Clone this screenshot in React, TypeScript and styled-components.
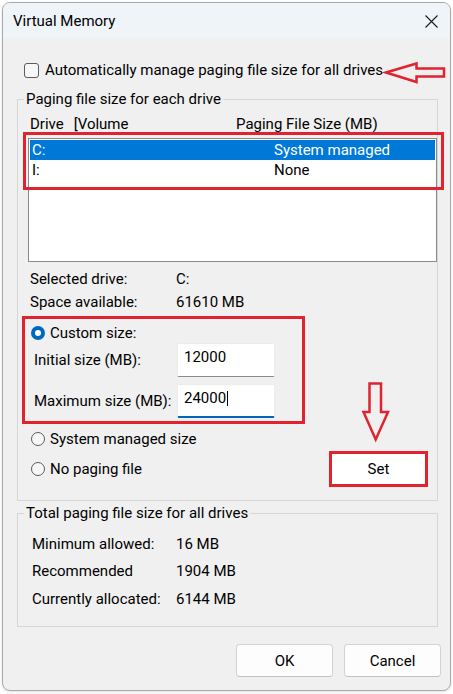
import React from "react";
import styled, { createGlobalStyle } from "styled-components";

const RED = "#e0232e";
const ACCENT = "#0067c0";

const GlobalStyle = createGlobalStyle`
  * { box-sizing: border-box; }
  html, body { margin: 0; padding: 0; background: #ffffff; }
  body {
    font-family: Roboto, "Noto Sans", Arial, sans-serif;
    font-size: 15px;
    color: #000;
  }
`;

const Screen = styled.div`
  position: relative;
  width: 453px;
  height: 694px;
  padding: 2px;
  overflow: hidden;
  background: #ffffff;
`;

const Window = styled.div`
  width: 449px;
  height: 689px;
  border: 1px solid #a9a9a9;
  border-radius: 8px;
  background: #f0f0f0;
  display: flex;
  flex-direction: column;
  overflow: hidden;
  box-shadow: 0 1px 3px rgba(0, 0, 0, 0.12);
`;

const TitleBar = styled.div`
  flex: none;
  height: 35px;
  display: flex;
  align-items: center;
  justify-content: space-between;
  padding: 0 12px 0 10px;
  background: #eff4f9;
  line-height: 18px;
`;

const Title = styled.span`
  font-size: 15px;
  color: #000;
`;

const CloseIcon = styled.svg`
  display: block;
  width: 13px;
  height: 13px;
  margin-top: 1px;
`;

const Body = styled.div`
  flex: 1;
  display: flex;
  flex-direction: column;
  padding: 22px 12px 0 14px;
`;

const CheckRow = styled.label`
  height: 20px;
  display: flex;
  align-items: center;
  gap: 6px;
  margin-left: 7px;
  line-height: 18px;
`;

const CheckBox = styled.span`
  width: 15px;
  height: 15px;
  border: 1px solid #5c5c5c;
  border-radius: 3px;
  background: #f7f7f7;
  flex: none;
`;

const Group = styled.section<{ $gap: number; $pt: number; $pb: number }>`
  position: relative;
  margin-top: ${(p) => p.$gap}px;
  border: 1px solid #d6d6d6;
  padding: ${(p) => p.$pt}px 0 ${(p) => p.$pb}px 0;
  display: flex;
  flex-direction: column;
`;

const Legend = styled.span`
  position: absolute;
  top: -10px;
  left: 6px;
  padding: 0 2px;
  line-height: 18px;
  background: #f0f0f0;
`;

const ColumnHeader = styled.div`
  display: grid;
  grid-template-columns: 206px auto;
  margin-left: 12px;
  line-height: 18px;
  height: 18px;
`;

const DriveHead = styled.span`
  display: flex;
  gap: 10px;
`;

const ListBox = styled.div`
  margin: 5px 0 0 10px;
  height: 124px;
  border: 1px solid #8b8b8b;
  background: #ffffff;
  padding: 1px;
`;

const ListRows = styled.div`
  position: relative;
  &::after {
    content: "";
    position: absolute;
    top: -8px;
    left: -7px;
    right: -9px;
    bottom: -10px;
    border: 3px solid ${RED};
    pointer-events: none;
  }
`;

const ListRow = styled.div<{ $selected?: boolean }>`
  height: 20px;
  display: grid;
  grid-template-columns: 242px auto;
  align-items: center;
  padding-left: 2px;
  line-height: 18px;
  background: ${(p) => (p.$selected ? "#0078d7" : "transparent")};
  color: ${(p) => (p.$selected ? "#ffffff" : "#000000")};
`;

const InfoGrid = styled.div<{ $left: number; $col: number; $row: number; $top: number }>`
  display: grid;
  grid-template-columns: ${(p) => p.$col}px auto;
  grid-auto-rows: ${(p) => p.$row}px;
  align-items: center;
  margin: ${(p) => p.$top}px 0 0 ${(p) => p.$left}px;
  line-height: 18px;
`;

const CustomBlock = styled.div`
  position: relative;
  margin-top: 10px;
  display: flex;
  flex-direction: column;
  &::after {
    content: "";
    position: absolute;
    top: -7px;
    left: 4px;
    width: 277px;
    bottom: -6px;
    border: 3px solid ${RED};
    pointer-events: none;
  }
`;

const RadioRow = styled.div<{ $top: number; $height?: number }>`
  height: ${(p) => p.$height ?? 20}px;
  margin-top: ${(p) => p.$top}px;
  display: flex;
  align-items: center;
  padding-left: 13px;
  line-height: 18px;
`;

const RadioLabel = styled.label`
  display: flex;
  align-items: center;
  gap: 5px;
`;

const Radio = styled.span<{ $checked?: boolean }>`
  width: 14px;
  height: 14px;
  border-radius: 50%;
  flex: none;
  display: flex;
  align-items: center;
  justify-content: center;
  border: ${(p) => (p.$checked ? "none" : "1px solid #5c5c5c")};
  background: ${(p) => (p.$checked ? ACCENT : "#f7f7f7")};
  &::before {
    content: "";
    display: ${(p) => (p.$checked ? "block" : "none")};
    width: 6px;
    height: 6px;
    border-radius: 50%;
    background: #ffffff;
  }
`;

const Spacer = styled.div`
  flex: 1;
`;

const SizeRow = styled.div<{ $top: number }>`
  display: grid;
  grid-template-columns: 143px 98px;
  align-items: center;
  margin: ${(p) => p.$top}px 0 0 16px;
  line-height: 18px;
`;

const TextBox = styled.div<{ $focused?: boolean }>`
  height: 34px;
  background: #ffffff;
  border: 1px solid #ececec;
  border-bottom: ${(p) => (p.$focused ? `2px solid ${ACCENT}` : "1px solid #8a8a8a")};
  border-radius: 2px;
  padding: 4px 6px 0 6px;
  line-height: 18px;
`;

const Caret = styled.span`
  display: inline-block;
  width: 1px;
  height: 15px;
  background: #000;
  vertical-align: -3px;
  margin-left: 1px;
`;

const Button = styled.button<{ $highlight?: boolean; $w: number; $h: number }>`
  width: ${(p) => p.$w}px;
  height: ${(p) => p.$h}px;
  font: inherit;
  font-size: 15px;
  color: #000;
  line-height: 18px;
  padding: 0;
  background: ${(p) => (p.$highlight ? "#ffffff" : "#fdfdfd")};
  border: ${(p) => (p.$highlight ? `3px solid ${RED}` : "1px solid #d3d3d3")};
  border-bottom-color: ${(p) => (p.$highlight ? RED : "#c2c2c2")};
  border-radius: ${(p) => (p.$highlight ? 0 : 4)}px;
`;

const SetButton = styled(Button)`
  margin-right: 9px;
`;

const ButtonBar = styled.div`
  display: flex;
  justify-content: flex-end;
  gap: 11px;
  margin: 17px -3px 0 0;
`;

const ArrowSvg = styled.svg<{ $x: number; $y: number }>`
  position: absolute;
  left: ${(p) => p.$x}px;
  top: ${(p) => p.$y}px;
  overflow: visible;
  pointer-events: none;
`;

const drives = [
  { drive: "C:", size: "System managed", selected: true },
  { drive: "I:", size: "None", selected: false },
];

const totals = [
  ["Minimum allowed:", "16 MB"],
  ["Recommended", "1904 MB"],
  ["Currently allocated:", "6144 MB"],
];

export default function App() {
  return (
    <>
      <GlobalStyle />
      <Screen>
        <Window>
          <TitleBar>
            <Title>Virtual Memory</Title>
            <CloseIcon viewBox="0 0 13 13">
              <path d="M0.5 0.5 L12.5 12.5 M12.5 0.5 L0.5 12.5" stroke="#1a1a1a" strokeWidth="1.1" fill="none" />
            </CloseIcon>
          </TitleBar>
          <Body>
            <CheckRow>
              <CheckBox />
              <span>Automatically manage paging file size for all drives</span>
            </CheckRow>

            <Group $gap={19} $pt={15} $pb={13}>
              <Legend>Paging file size for each drive</Legend>
              <ColumnHeader>
                <DriveHead>
                  <span>Drive</span>
                  <span>[Volume</span>
                </DriveHead>
                <span>Paging File Size (MB)</span>
              </ColumnHeader>
              <ListBox>
                <ListRows>
                  {drives.map((d) => (
                    <ListRow key={d.drive} $selected={d.selected}>
                      <span>{d.drive}</span>
                      <span>{d.size}</span>
                    </ListRow>
                  ))}
                </ListRows>
              </ListBox>

              <InfoGrid $left={12} $col={146} $row={23} $top={5}>
                <span>Selected drive:</span>
                <span>C:</span>
                <span>Space available:</span>
                <span>61610 MB</span>
              </InfoGrid>

              <CustomBlock>
                <RadioRow $top={0}>
                  <RadioLabel>
                    <Radio $checked />
                    <span>Custom size:</span>
                  </RadioLabel>
                </RadioRow>
                <SizeRow $top={0}>
                  <span>Initial size (MB):</span>
                  <TextBox>12000</TextBox>
                </SizeRow>
                <SizeRow $top={7}>
                  <span>Maximum size (MB):</span>
                  <TextBox $focused>
                    24000
                    <Caret />
                  </TextBox>
                </SizeRow>
              </CustomBlock>

              <RadioRow $top={11}>
                <RadioLabel>
                  <Radio />
                  <span>System managed size</span>
                </RadioLabel>
              </RadioRow>
              <RadioRow $top={2} $height={36}>
                <RadioLabel>
                  <Radio />
                  <span>No paging file</span>
                </RadioLabel>
                <Spacer />
                <SetButton $highlight $w={99} $h={36}>
                  Set
                </SetButton>
              </RadioRow>
            </Group>

            <Group $gap={12} $pt={16} $pb={13.5}>
              <Legend>Total paging file size for all drives</Legend>
              <InfoGrid $left={14} $col={144} $row={27.5} $top={0}>
                {totals.map(([k, v]) => (
                  <React.Fragment key={k}>
                    <span>{k}</span>
                    <span>{v}</span>
                  </React.Fragment>
                ))}
              </InfoGrid>
            </Group>

            <ButtonBar>
              <Button $w={97} $h={33}>OK</Button>
              <Button $w={97} $h={33}>Cancel</Button>
            </ButtonBar>
          </Body>
        </Window>

        <ArrowSvg $x={383} $y={60} width="64" height="26" viewBox="0 0 64 26">
          <polygon
            points="3,12.5 33.5,3.5 33.5,8.5 61,8.5 61,16.5 33.5,16.5 33.5,22"
            fill="none"
            stroke={RED}
            strokeWidth="2.5"
          />
        </ArrowSvg>
        <ArrowSvg $x={358} $y={378} width="36" height="66" viewBox="0 0 36 66">
          <polygon
            points="11.5,5.5 23,5.5 23,34 30,34 17.7,61.5 5.5,34 11.5,34"
            fill="none"
            stroke={RED}
            strokeWidth="2.5"
          />
        </ArrowSvg>
      </Screen>
    </>
  );
}
